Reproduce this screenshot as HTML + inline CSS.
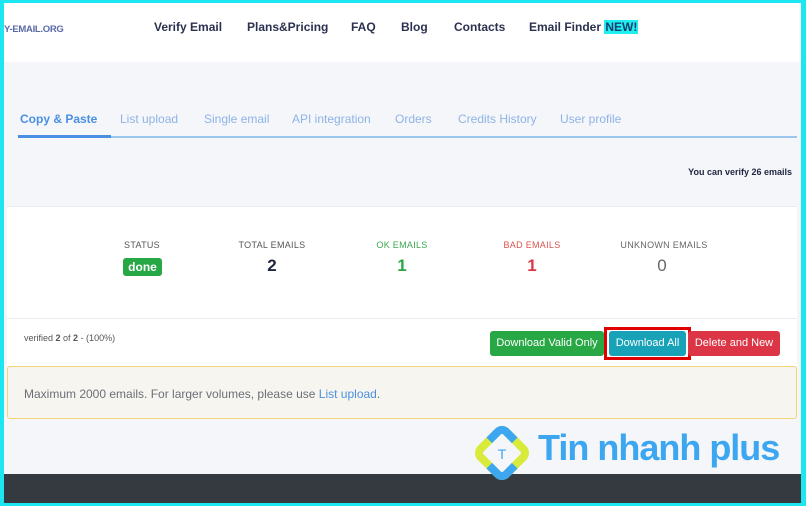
<!DOCTYPE html>
<html><head><meta charset="utf-8"><style>
*{margin:0;padding:0;box-sizing:border-box}
body{width:806px;height:506px;overflow:hidden;background:#1ee6f0;font-family:"Liberation Sans",sans-serif;position:relative}
.page{position:absolute;left:4px;top:3px;width:797px;height:500px;background:#f4f6f9;overflow:hidden}
.hdr{position:absolute;left:0;top:0;width:797px;height:59px;background:#fff}
.logo{position:absolute;left:0;top:21px;font-size:9.5px;color:#5a6aa8;font-weight:bold;letter-spacing:-.3px}
.nav{position:absolute;top:17px;font-size:12px;font-weight:bold;color:#2b3150;white-space:nowrap}
.new{background:#1ef0f0;color:#1a3b6e;padding:0 1px}
.tab{position:absolute;top:109px;font-size:12px;color:#8fb3e6;white-space:nowrap}
.tabline{position:absolute;left:14px;top:133px;width:779px;height:2px;background:#9cc6ee}
.tabact{position:absolute;left:14px;top:132px;width:93px;height:3px;background:#4a90e2}
.card{position:absolute;left:3px;top:203px;width:790px;height:160px;background:#fff;border-top:1px solid #e8ebef}
.sl{position:absolute;top:237px;font-size:9px;letter-spacing:.3px;text-align:center;width:120px}
.sv{position:absolute;top:253px;font-size:17px;text-align:center;width:120px;font-weight:bold}
.btn{position:absolute;top:328px;height:25px;font-size:11px;color:#fff;line-height:25px;text-align:center;border-radius:3px;white-space:nowrap}
.alert{position:absolute;left:3px;top:363px;width:790px;height:53px;background:#f7f5ef;border:1px solid #f5d57a;border-radius:3px;font-size:12px;color:#6b6f78;padding:20px 16px}
.foot{position:absolute;left:0;top:471px;width:797px;height:29px;background:#343a40}
</style></head><body><div class="page">
<div class="hdr"></div>
<div class="logo">Y-EMAIL.ORG</div>
<div class="nav" style="left:150px">Verify Email</div>
<div class="nav" style="left:243px">Plans&amp;Pricing</div>
<div class="nav" style="left:347px">FAQ</div>
<div class="nav" style="left:397px">Blog</div>
<div class="nav" style="left:450px">Contacts</div>
<div class="nav" style="left:525px">Email Finder <span class="new">NEW!</span></div>
<div class="tab" style="left:16px;color:#4a90e2;font-weight:bold">Copy &amp; Paste</div>
<div class="tab" style="left:116px">List upload</div>
<div class="tab" style="left:200px">Single email</div>
<div class="tab" style="left:288px">API integration</div>
<div class="tab" style="left:391px">Orders</div>
<div class="tab" style="left:454px">Credits History</div>
<div class="tab" style="left:556px">User profile</div>
<div class="tabline"></div><div class="tabact"></div>
<div style="position:absolute;right:9px;top:164px;font-size:9px;font-weight:bold;color:#1f2540">You can verify 26 emails</div>
<div class="card"></div>
<div style="position:absolute;left:3px;top:315px;width:790px;height:1px;background:#e8ebef"></div>
<div class="sl" style="left:78px;color:#555">STATUS</div>
<div style="position:absolute;left:119px;top:255px;width:39px;height:18px;background:#28a745;color:#fff;font-weight:bold;font-size:12px;text-align:center;line-height:18px;border-radius:3px">done</div>
<div class="sl" style="left:208px;color:#555">TOTAL EMAILS</div>
<div class="sv" style="left:208px;color:#1f2540">2</div>
<div class="sl" style="left:338px;color:#3aa84f">OK EMAILS</div>
<div class="sv" style="left:338px;color:#28a745">1</div>
<div class="sl" style="left:468px;color:#d9534f">BAD EMAILS</div>
<div class="sv" style="left:468px;color:#dc3545">1</div>
<div class="sl" style="left:600px;color:#666;width:120px">UNKNOWN EMAILS</div>
<div class="sv" style="left:598px;color:#666;font-weight:normal">0</div>
<div style="position:absolute;left:20px;top:330px;font-size:9px;color:#555">verified <b>2</b> of <b>2</b> - (100%)</div>
<div class="btn" style="left:486px;width:114px;background:#28a745">Download Valid Only</div>
<div style="position:absolute;left:600px;top:324px;width:87px;height:33px;border:3px solid #e00000"></div>
<div class="btn" style="left:605px;width:77px;background:#17a2b8">Download All</div>
<div class="btn" style="left:684px;width:92px;background:#dc3545">Delete and New</div>
<div class="alert">Maximum 2000 emails. For larger volumes, please use <span style="color:#4a90e2">List upload</span>.</div>
<div class="foot"></div>
<svg style="position:absolute;left:466px;top:420px" width="64" height="60" viewBox="0 0 64 60">
<g transform="rotate(45 32 30)"><rect x="14" y="12" width="36" height="36" rx="6" fill="none" stroke="#d8ea3a" stroke-width="8"/>
<path d="M14 30V18a6 6 0 0 1 6-6h12M50 30v12a6 6 0 0 1-6 6H32" fill="none" stroke="#3ca6f0" stroke-width="8"/></g>
<text x="32" y="36" font-size="14" fill="#3ca6f0" text-anchor="middle" font-family="Liberation Sans">T</text></svg>
<div style="position:absolute;left:534px;top:424px;font-size:36px;font-weight:bold;color:#3ca6f0;letter-spacing:-1px;white-space:nowrap">Tin nhanh plus</div>
</div></body></html>
